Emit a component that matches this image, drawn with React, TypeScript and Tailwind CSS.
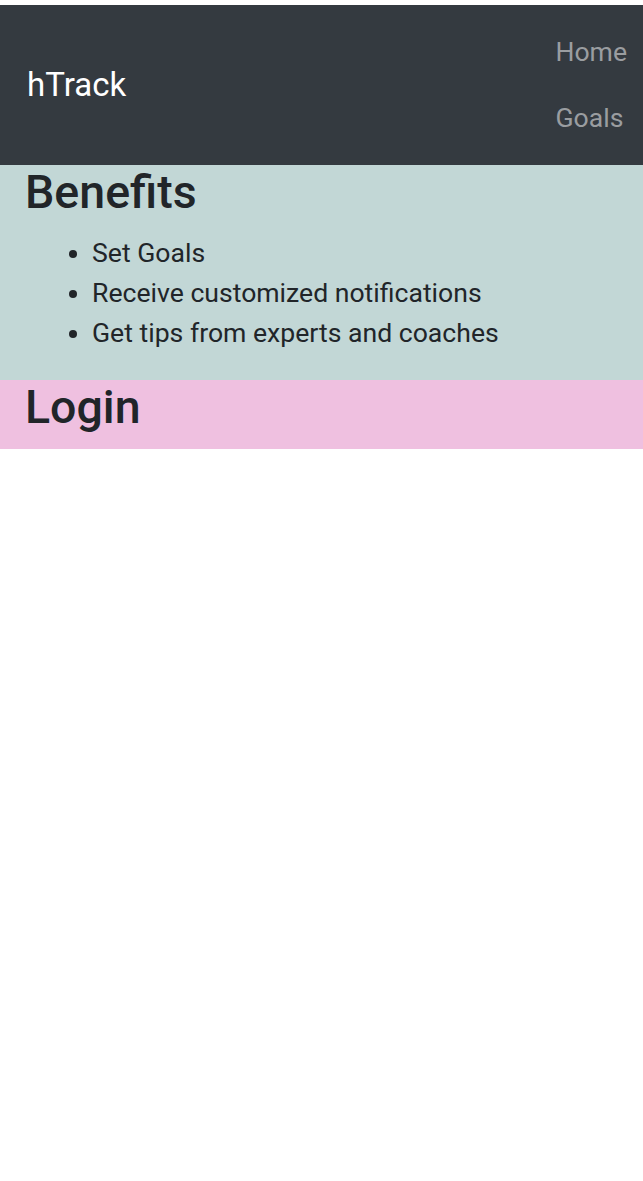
export default function App() {
  return (
    <div className="min-h-[1181px] bg-white pt-[5px] font-['Roboto',sans-serif] text-[#212529]">
      <nav className="flex h-[160px] items-center justify-between bg-[#343a40] pl-[27px] pr-[16px]">
        <a href="#" className="text-[33px] leading-[1.5] text-white">
          hTrack
        </a>
        <ul className="flex flex-col items-start">
          <li>
            <a href="#" className="block py-[13px] text-[26.6px] leading-[40px] text-[#9a9da0]">
              Home
            </a>
          </li>
          <li>
            <a href="#" className="block py-[13px] text-[26.6px] leading-[40px] text-[#9a9da0]">
              Goals
            </a>
          </li>
        </ul>
      </nav>

      <section className="bg-[#c2d7d6] pb-[27px] pl-[25px]">
        <h2 className="mb-[13px] text-[46.5px] font-medium leading-[55px]">Benefits</h2>
        <ul className="list-disc pl-[67px] text-[26.6px] leading-[40px]">
          <li>Set Goals</li>
          <li>Receive customized notifications</li>
          <li>Get tips from experts and coaches</li>
        </ul>
      </section>

      <section className="bg-[#efc0e0] pb-[14px] pl-[25px]">
        <h2 className="text-[46.5px] font-medium leading-[55px]">Login</h2>
      </section>
    </div>
  );
}
